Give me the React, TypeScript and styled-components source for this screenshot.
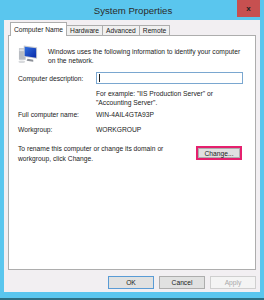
import styled, { createGlobalStyle } from "styled-components";

const GlobalStyle = createGlobalStyle`
  html, body {
    margin: 0;
    padding: 0;
    background: #ffffff;
  }
  body {
    font-family: "Liberation Sans", Arial, sans-serif;
  }
`;

const Window = styled.div`
  width: 264px;
  height: 300px;
  box-sizing: border-box;
  background: #5ac6ee;
  border-bottom: 2px solid #2d6e82;
  display: flex;
  flex-direction: column;
  padding: 0 4px 6px 4px;
`;

const TitleBar = styled.div`
  height: 20px;
  position: relative;
  display: flex;
  align-items: center;
  justify-content: center;
`;

const TitleText = styled.span`
  font-size: 9.6px;
  color: #2b2b2b;
  margin-left: 2px;
`;

const CloseButton = styled.div`
  position: absolute;
  top: 0;
  right: 0;
  width: 23px;
  height: 17px;
  background: #c75050;
  display: flex;
  align-items: center;
  justify-content: center;
  font-size: 8px;
  font-weight: 700;
  color: #222;
`;

const Body = styled.div`
  flex: 1;
  background: #f2eff2;
  display: flex;
  flex-direction: column;
  padding: 2px 4px 0 4px;
`;

const Tabs = styled.div`
  display: flex;
  align-items: flex-end;
  height: 14px;
  padding-left: 2px;
`;

const Tab = styled.div<{ $active?: boolean }>`
  height: ${(p) => (p.$active ? "14px" : "11px")};
  box-sizing: border-box;
  padding: 0 3px;
  border: 1px solid #adadad;
  border-bottom: ${(p) => (p.$active ? "none" : "1px solid #adadad")};
  margin-left: ${(p) => (p.$active ? "0" : "-1px")};
  background: ${(p) => (p.$active ? "#ffffff" : "#f0f0f0")};
  font-size: 6.7px;
  color: #222;
  display: flex;
  align-items: center;
  position: relative;
  z-index: ${(p) => (p.$active ? 2 : 1)};
`;

const Panel = styled.div`
  height: 235px;
  box-sizing: border-box;
  margin-top: -1px;
  background: #ffffff;
  border: 1px solid #adadad;
  padding: 8px 9px 0 9px;
  display: flex;
  flex-direction: column;
  font-size: 6.7px;
  color: #222;
`;

const Intro = styled.div`
  display: flex;
  gap: 9px;
  align-items: flex-start;
`;

const IntroText = styled.p`
  margin: 3px 0 0 0;
  line-height: 9px;
  white-space: nowrap;
`;

const Fields = styled.div`
  display: grid;
  grid-template-columns: 78px 1fr;
  margin-top: 6px;
`;

const Cell = styled.div<{ $h: number }>`
  height: ${(p) => p.$h}px;
  display: flex;
  align-items: center;
`;

const Input = styled.div`
  width: 147px;
  height: 12px;
  box-sizing: border-box;
  border: 1px solid #7aa7d0;
  background: #fff;
  display: flex;
  align-items: center;
  padding-left: 2px;
`;

const Caret = styled.span`
  width: 1px;
  height: 8px;
  background: #222;
`;

const Hint = styled.div`
  grid-column: 2;
  line-height: 9px;
  margin-top: 4px;
`;

const RenameRow = styled.div`
  display: flex;
  justify-content: space-between;
  align-items: flex-start;
  margin-top: 6px;
  padding-right: 4px;
`;

const RenameText = styled.p`
  margin: 0;
  line-height: 10px;
`;

const Highlight = styled.div`
  border: 2px solid #e5206e;
  margin-top: 2px;
`;

const Button = styled.div<{ $disabled?: boolean; $default?: boolean }>`
  width: 46px;
  height: 13px;
  box-sizing: border-box;
  border: 1px solid ${(p) => (p.$default ? "#5a9bd5" : p.$disabled ? "#cfcfcf" : "#adadad")};
  background: ${(p) => (p.$disabled ? "#f4f4f4" : "#e1e1e1")};
  color: ${(p) => (p.$disabled ? "#a8a8a8" : "#222")};
  font-size: 6.7px;
  display: flex;
  align-items: center;
  justify-content: center;
`;

const ChangeButton = styled(Button)`
  width: 42px;
  height: 10px;
  border-color: #adadad;
`;

const Footer = styled.div`
  display: flex;
  justify-content: flex-end;
  gap: 5px;
  padding-top: 6px;
`;

const ComputerIcon = () => (
  <svg width="21" height="20" viewBox="0 0 22 20">
    <defs>
      <linearGradient id="scr" x1="0" y1="0" x2="1" y2="1">
        <stop offset="0" stopColor="#2f6fe0" />
        <stop offset="1" stopColor="#0a2aa8" />
      </linearGradient>
    </defs>
    <rect x="1" y="4" width="7" height="12" fill="#b8bcc2" />
    <rect x="1.5" y="5" width="6" height="2" fill="#dfe2e6" />
    <path d="M6 1 L20 3 L20 15 L6 13 Z" fill="#c9ccd1" />
    <path d="M7 2.3 L19 4 L19 13.8 L7 12 Z" fill="url(#scr)" />
    <path d="M10 15 L16 16 L16 18 L9 17 Z" fill="#8d9198" />
    <ellipse cx="4" cy="18" rx="3.5" ry="1.3" fill="#d8dadd" />
  </svg>
);

const App = () => {
  return (
    <>
      <GlobalStyle />
      <Window>
        <TitleBar>
          <TitleText>System Properties</TitleText>
          <CloseButton>x</CloseButton>
        </TitleBar>
        <Body>
          <Tabs>
            <Tab $active>Computer Name</Tab>
            <Tab>Hardware</Tab>
            <Tab>Advanced</Tab>
            <Tab>Remote</Tab>
          </Tabs>
          <Panel>
            <Intro>
              <ComputerIcon />
              <IntroText>
                Windows uses the following information to identify your computer
                <br />
                on the network.
              </IntroText>
            </Intro>
            <Fields>
              <Cell $h={14}>Computer description:</Cell>
              <Cell $h={14}>
                <Input>
                  <Caret />
                </Input>
              </Cell>
              <Hint>
                For example: "IIS Production Server" or
                <br />
                "Accounting Server".
              </Hint>
              <Cell $h={14}>Full computer name:</Cell>
              <Cell $h={14}>WIN-4AIL4GTA93P</Cell>
              <Cell $h={17}>Workgroup:</Cell>
              <Cell $h={17}>WORKGROUP</Cell>
            </Fields>
            <RenameRow>
              <RenameText>
                To rename this computer or change its domain or
                <br />
                workgroup, click Change.
              </RenameText>
              <Highlight>
                <ChangeButton>Change...</ChangeButton>
              </Highlight>
            </RenameRow>
          </Panel>
          <Footer>
            <Button $default>OK</Button>
            <Button>Cancel</Button>
            <Button $disabled>Apply</Button>
          </Footer>
        </Body>
      </Window>
    </>
  );
};

export default App;
